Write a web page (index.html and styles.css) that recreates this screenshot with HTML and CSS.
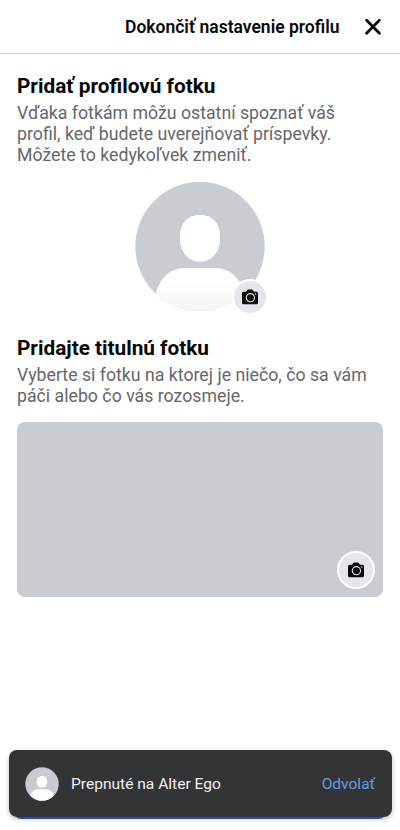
FILE: index.html
```
<!DOCTYPE html>
<html lang="sk">
<head>
<meta charset="utf-8">
<title>Dokončiť nastavenie profilu</title>
<link rel="stylesheet" href="styles.css">
</head>
<body>
<svg width="0" height="0" class="defs">
  <symbol id="camera" viewBox="0 0 16 16">
    <path fill="#080a0c" d="M1.500 2.800H4L5.200 1q.4-.5 1-.5h3.600q.6 0 1 .5L12 2.800h2.500Q16 2.800 16 4.300v9.400q0 1.500-1.500 1.500H1.500Q0 15.200 0 13.700V4.300Q0 2.800 1.500 2.800Z"/>
    <circle cx="8.400" cy="8.700" r="4.100" fill="none" stroke="#e4e6eb" stroke-width="1.100"/>
    <circle cx="13.700" cy="5" r=".7" fill="#e4e6eb"/>
  </symbol>
</svg>
<div class="screen">
  <header class="topbar">
    <h1>Dokončiť nastavenie profilu</h1>
    <svg class="close" viewBox="0 0 18 18"><path d="M2.600 2.200 15.400 15.200M15.400 2.200 2.600 15.200"/></svg>
  </header>
  <main>
    <section>
      <h2>Pridať profilovú fotku</h2>
      <p>Vďaka fotkám môžu ostatní spoznať váš<br>profil, keď budete uverejňovať príspevky.<br>Môžete to kedykoľvek zmeniť.</p>
      <div class="avatar">
        <svg viewBox="0 0 130 130">
          <defs>
            <clipPath id="round"><circle cx="65" cy="64.500" r="64.700"/></clipPath>
            <linearGradient id="fade" x1="0" y1="0" x2="0" y2="1"><stop offset=".25" stop-color="#fff"/><stop offset="1" stop-color="#f3f5f6"/></linearGradient>
          </defs>
          <g clip-path="url(#round)">
            <rect width="130" height="130" fill="#c9ccd1"/>
            <path fill="#fff" d="M65 32.800C76.500 32.800 85 41 85 53V57C85 70 76.500 79.700 65 79.700S45 70 45 57V53C45 41 53.500 32.800 65 32.800Z"/>
            <path fill="url(#fade)" d="M20 130V115C23 98 34 86 50 86H80C96 86 107 98 110 115V130Z"/>
          </g>
        </svg>
        <span class="camera"><svg><use href="#camera"/></svg></span>
      </div>
    </section>
    <section class="cover-section">
      <h2>Pridajte titulnú fotku</h2>
      <p>Vyberte si fotku na ktorej je niečo, čo sa vám<br>páči alebo čo vás rozosmeje.</p>
      <div class="cover"><span class="camera ringed"><svg><use href="#camera"/></svg></span></div>
    </section>
  </main>
  <footer class="bottom">
    <div class="button-edge"></div>
    <div class="snackbar">
      <svg class="mini" viewBox="0 0 34 34">
        <defs><clipPath id="mini-round"><circle cx="17" cy="17" r="16.700"/></clipPath></defs>
        <g clip-path="url(#mini-round)"><rect width="34" height="34" fill="#c9cad1"/><rect x="11.800" y="9" width="10.400" height="11.800" rx="5" fill="#fff"/><path fill="#fff" d="M5 34V30C6 25 9 22.300 13 22.300H21C25 22.300 28 25 29 30V34Z"/></g>
      </svg>
      <span class="message">Prepnuté na Alter Ego</span>
      <span class="undo">Odvolať</span>
    </div>
  </footer>
</div>
</body>
</html>
```
FILE: styles.css
```
* { box-sizing: border-box; }
body { margin: 0; background: #fff; font-family: Roboto, "Liberation Sans", sans-serif; }
h1, h2, p { margin: 0; }
.defs { position: absolute; }
.screen { width: 400px; height: 830px; display: flex; flex-direction: column; overflow: hidden; }
.topbar { height: 54px; flex: none; display: flex; align-items: center; justify-content: flex-end; padding-right: 18px; border-bottom: 1px solid #c9cccf; }
.topbar h1 { width: 215px; margin-right: 24px; font-size: 17.5px; line-height: 20px; font-weight: 600; color: #080808; white-space: nowrap; }
.close { width: 18px; height: 18px; fill: none; stroke: #080808; stroke-width: 2.8; stroke-linecap: round; }
main { flex: 1; padding: 20px 17px 0; }
h2 { font-size: 20.75px; line-height: 24px; font-weight: 700; color: #050505; white-space: nowrap; }
p { margin-top: 5px; font-size: 17.73px; line-height: 21px; color: #65676b; white-space: nowrap; }
.avatar { position: relative; width: 130px; height: 130px; margin: 16px auto 0; }
.avatar > svg { display: block; width: 130px; height: 130px; }
.camera { display: flex; align-items: center; justify-content: center; width: 36px; height: 36px; border-radius: 50%; background: #e4e6eb; border: 2px solid #fff; }
.camera svg { width: 16px; height: 16px; }
.avatar .camera { position: absolute; left: 97px; top: 96.5px; }
.cover-section { margin-top: 24px; }
.cover { display: flex; align-items: flex-end; justify-content: flex-end; height: 175px; margin-top: 15px; padding: 8px; background: #c9ccd1; border-radius: 8px; }
.ringed { width: 38px; height: 38px; }
.bottom { position: relative; flex: none; height: 80px; padding: 0 8.5px; }
.button-edge { position: absolute; left: 15px; right: 15px; top: 57px; height: 11.5px; background: #2c4f9c; border-radius: 6px; z-index: 1; }
.snackbar { position: relative; z-index: 2; display: flex; align-items: center; height: 67px; padding: 0 16.5px; border-radius: 8px; background: #333436; font-size: 15.55px; }
.bottom::before { content: ""; position: absolute; left: 8.5px; right: 8.5px; top: 0; height: 67px; border-radius: 8px; box-shadow: 0 2px 5px rgba(0,0,0,.24); }
.mini { width: 34px; height: 34px; margin-right: 12px; }
.message { color: #f1f2f4; white-space: nowrap; }
.undo { margin-left: auto; color: #5f9fe3; white-space: nowrap; }
```
